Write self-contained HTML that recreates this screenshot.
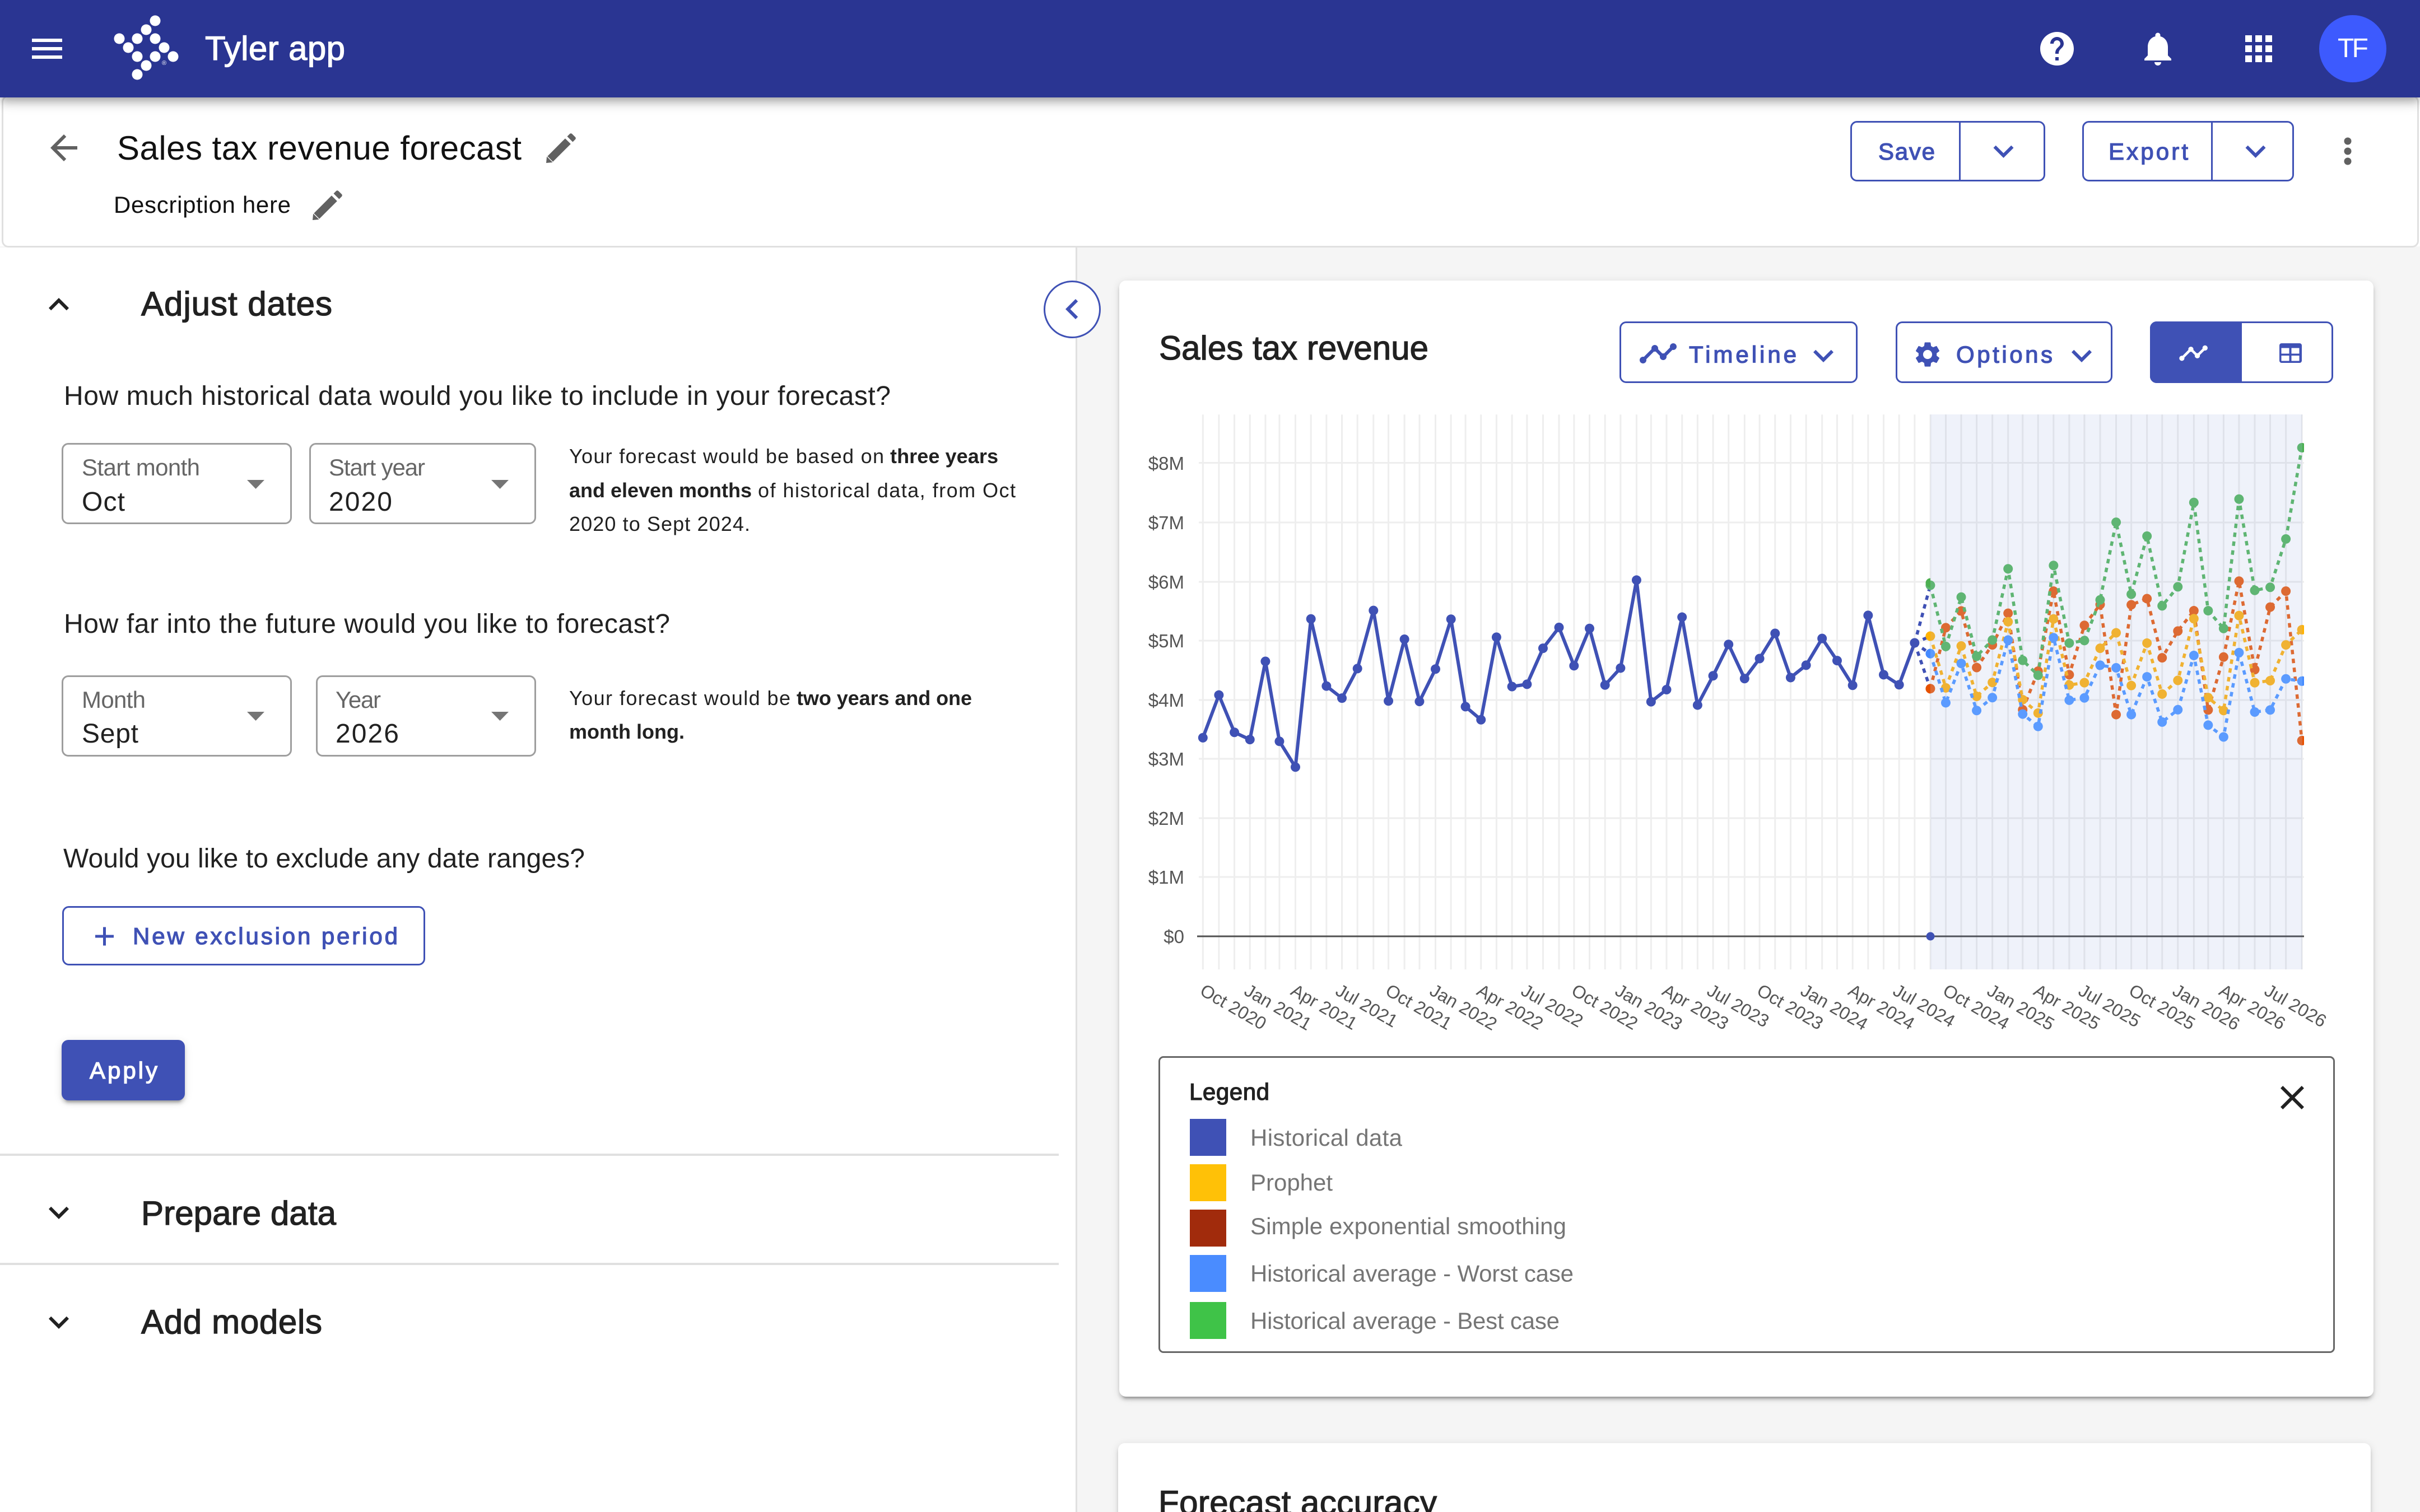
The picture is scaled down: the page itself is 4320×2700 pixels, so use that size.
<!DOCTYPE html>
<html lang="en">
<head>
<meta charset="utf-8">
<title>Tyler app - Sales tax revenue forecast</title>
<style>
html{margin:0;padding:0;width:4320px;height:2700px;overflow:hidden;background:#f5f5f5}
body{margin:0;padding:0;position:relative;width:4320px;height:2700px;overflow:hidden;background:#f5f5f5;font-family:"Liberation Sans",sans-serif}
div{box-sizing:border-box;position:absolute}
#top{left:0;top:0;width:4320px;height:440px;background:#fff}
#appbar{left:0;top:0;width:4320px;height:174px;background:#2a3592;box-shadow:0 6px 12px -3px rgba(0,0,0,.2),0 12px 15px rgba(0,0,0,.14),0 3px 30px rgba(0,0,0,.12);z-index:2}
#sub{left:3px;top:170px;width:4315px;height:272px;background:#fff;border:3px solid #e0e0e0;border-radius:12px;z-index:1}
#left{left:0;top:442px;width:1923px;height:2258px;background:#fff;border-right:3px solid #e0e0e0}
.card{background:#fff;border-radius:12px;box-shadow:0 9px 3px -6px rgba(0,0,0,.2),0 6px 6px rgba(0,0,0,.14),0 3px 15px rgba(0,0,0,.12)}
.btn{border:3px solid #3f51b5;border-radius:12px;background:#fff;z-index:3}
.sel{border:3px solid #9e9e9e;border-radius:12px;background:#fff}
.rule{left:0;width:1890px;height:4px;background:#e0e0e0}
.sw{left:2124px;width:65px}
#ov{position:absolute;left:0;top:0;z-index:4}
text{font-family:"Liberation Sans",sans-serif}
.m{stroke-width:1.3px}
.ns{vector-effect:non-scaling-stroke;fill:none}
</style>
</head>
<body>
<div id="top"></div>
<div id="left"></div>
<div id="sub"></div>
<div id="appbar"></div>

<div class="rule" style="top:2060px"></div>
<div class="rule" style="top:2255px"></div>

<div class="sel" style="left:110px;top:791px;width:411px;height:145px"></div>
<div class="sel" style="left:552px;top:791px;width:405px;height:145px"></div>
<div class="sel" style="left:110px;top:1206px;width:411px;height:145px"></div>
<div class="sel" style="left:564px;top:1206px;width:393px;height:145px"></div>

<div class="btn" style="left:111px;top:1618px;width:648px;height:106px"></div>
<div style="left:110px;top:1857px;width:220px;height:108px;background:#3f51b5;border-radius:12px;box-shadow:0 9px 3px -6px rgba(0,0,0,.2),0 6px 6px rgba(0,0,0,.14),0 3px 15px rgba(0,0,0,.12)"></div>

<div style="left:1863px;top:501px;width:102px;height:103px;border-radius:50%;background:#fff;border:3px solid #3f51b5;z-index:3"></div>

<div class="btn" style="left:3303px;top:216px;width:348px;height:108px"></div>
<div style="left:3497px;top:216px;width:3px;height:108px;background:#3f51b5;z-index:3"></div>
<div class="btn" style="left:3717px;top:216px;width:378px;height:108px"></div>
<div style="left:3947px;top:216px;width:3px;height:108px;background:#3f51b5;z-index:3"></div>

<div class="card" style="left:1998px;top:501px;width:2239px;height:1993px"></div>
<div class="card" style="left:1996px;top:2577px;width:2236px;height:140px"></div>

<div class="btn" style="left:2891px;top:574px;width:425px;height:110px"></div>
<div class="btn" style="left:3384px;top:574px;width:387px;height:110px"></div>
<div class="btn" style="left:3838px;top:574px;width:327px;height:110px"></div>
<div style="left:3838px;top:574px;width:164px;height:110px;background:#3f51b5;border-radius:12px 0 0 12px;z-index:3"></div>

<div style="left:2068px;top:1886px;width:2100px;height:530px;border:3px solid #666;border-radius:9px;background:#fff"></div>
<div class="sw" style="top:1998px;height:66px;background:#3f51b5"></div>
<div class="sw" style="top:2079px;height:66px;background:#ffc107"></div>
<div class="sw" style="top:2160px;height:66px;background:#a12b0c"></div>
<div class="sw" style="top:2241px;height:66px;background:#4a8cff"></div>
<div class="sw" style="top:2325px;height:66px;background:#3fc348"></div>

<svg id="ov" width="4320" height="2700" viewBox="0 0 4320 2700" xmlns="http://www.w3.org/2000/svg">
<defs>
<path id="em" d="M16.59 8.59L12 13.17 7.41 8.59 6 10l6 6 6-6z"/>
<g id="pen">
<path d="M3 21l.35-3.6L14.3 6.4l3.3 3.3L6.6 20.65z"/>
<path d="M15.5 5.2l1.5-1.5c.4-.4 1-.4 1.4 0l1.9 1.9c.4.4.4 1 0 1.4l-1.5 1.5z"/>
<path d="M3.6 17.1l3.3 3.3" stroke="#fff" stroke-width=".45" fill="none"/>
</g>
<path id="tl" d="M23 8c0 1.1-.9 2-2 2-.18 0-.35-.02-.51-.07l-3.56 3.55c.05.16.07.34.07.52 0 1.1-.9 2-2 2s-2-.9-2-2c0-.18.02-.36.07-.52l-2.55-2.55c-.16.05-.34.07-.52.07s-.36-.02-.52-.07l-4.55 4.56c.05.16.07.33.07.51 0 1.1-.9 2-2 2s-2-.9-2-2 .9-2 2-2c.18 0 .35.02.51.07l4.56-4.55C8.02 9.36 8 9.18 8 9c0-1.1.9-2 2-2s2 .9 2 2c0 .18-.02.36-.07.52l2.55 2.55c.16-.05.34-.07.52-.07s.36.02.52.07l3.55-3.56C19.02 8.35 19 8.18 19 8c0-1.1.9-2 2-2s2 .9 2 2z"/>
<clipPath id="plot"><rect x="2000" y="700" width="2113" height="1040"/></clipPath>
<clipPath id="outL"><rect x="3400" y="700" width="46" height="1040"/></clipPath>
<clipPath id="outR"><rect x="4110" y="700" width="3" height="1040"/></clipPath>
</defs>

<!-- app bar -->
<g fill="#fff">
<path transform="translate(48,51) scale(3)" d="M3 18h18v-2H3v2zm0-5h18v-2H3v2zm0-7v2h18V6H3z"/>
<circle cx="277" cy="37" r="9.5"/><circle cx="261" cy="53" r="9.5"/><circle cx="213" cy="69" r="9.5"/><circle cx="245" cy="69" r="9.5"/><circle cx="277" cy="69" r="9.5"/><circle cx="229" cy="85" r="9.5"/><circle cx="293" cy="85" r="9.5"/><circle cx="245" cy="101" r="9.5"/><circle cx="277" cy="101" r="9.5"/><circle cx="309" cy="101" r="9.5"/><circle cx="261" cy="117" r="9.5"/><circle cx="245" cy="133" r="9.5"/>
<text x="289" y="116" font-size="11">®</text>
<text x="366" y="107" font-size="60" textLength="250" stroke="#fff" class="m">Tyler app</text>
<path transform="translate(3636,51) scale(3)" d="M12 2C6.48 2 2 6.48 2 12s4.48 10 10 10 10-4.48 10-10S17.52 2 12 2zm1 17h-2v-2h2v2zm2.07-7.75l-.9.92C13.45 12.9 13 13.5 13 15h-2v-.5c0-1.1.45-2.1 1.17-2.83l1.24-1.26c.37-.36.59-.86.59-1.41 0-1.1-.9-2-2-2s-2 .9-2 2H8c0-2.21 1.79-4 4-4s4 1.79 4 4c0 .88-.36 1.68-.93 2.25z"/>
<path transform="translate(3816,51) scale(3)" d="M12 22c1.1 0 2-.9 2-2h-4c0 1.1.89 2 2 2zm6-6v-5c0-3.07-1.64-5.64-4.5-6.32V4c0-.83-.67-1.5-1.5-1.5s-1.5.67-1.5 1.5v.68C7.63 5.36 6 7.92 6 11v5l-2 2v1h16v-1l-2-2z"/>
<path transform="translate(3996,51) scale(3)" d="M4 8h4V4H4v4zm6 12h4v-4h-4v4zm-6 0h4v-4H4v4zm0-6h4v-4H4v4zm6 0h4v-4h-4v4zm6-10v4h4V4h-4zm-6 4h4V4h-4v4zm6 6h4v-4h-4v4zm0 6h4v-4h-4v4z"/>
</g>
<circle cx="4200" cy="87" r="60" fill="#3d5afe"/>
<text x="4173" y="102" font-size="48" fill="#fff" textLength="55">TF</text>

<!-- sub header -->
<path transform="translate(78,228) scale(3)" fill="#616161" d="M20 11H7.83l5.59-5.59L12 4l-8 8 8 8 1.41-1.41L7.83 13H20v-2z"/>
<text x="209" y="285" font-size="60" fill="#111" textLength="722">Sales tax revenue forecast</text>
<use href="#pen" transform="translate(966,228) scale(3)" fill="#616161"/>
<text x="203" y="380" font-size="42" fill="#111" textLength="316">Description here</text>
<use href="#pen" transform="translate(549,330) scale(3)" fill="#616161"/>
<g fill="#3f51b5" stroke="#3f51b5">
<text x="3353" y="285" font-size="42" textLength="101" class="m">Save</text>
<text x="3764" y="285" font-size="42" textLength="142" class="m">Export</text>
</g>
<g fill="#3f51b5">
<use href="#em" transform="translate(3540.5,234) scale(3)"/>
<use href="#em" transform="translate(3990.5,234) scale(3)"/>
</g>
<g fill="#616161"><circle cx="4191" cy="252" r="6.5"/><circle cx="4191" cy="270" r="6.5"/><circle cx="4191" cy="288" r="6.5"/></g>

<!-- left panel -->
<path transform="translate(69,508) scale(3)" fill="#212121" d="M12 8l-6 6 1.41 1.41L12 10.83l4.59 4.58L18 14z"/>
<path transform="translate(1878,516) scale(3)" fill="#3f51b5" d="M15.41 7.41L14 6l-6 6 6 6 1.41-1.41L10.83 12z"/>
<g fill="#212121">
<text x="252" y="563" font-size="60" textLength="341" stroke="#212121" class="m">Adjust dates</text>
<text x="114" y="723" font-size="48" textLength="1476">How much historical data would you like to include in your forecast?</text>
<text x="114" y="1130" font-size="48" textLength="1082">How far into the future would you like to forecast?</text>
<text x="113" y="1549" font-size="48" textLength="931">Would you like to exclude any date ranges?</text>
<text x="146" y="912" font-size="48" textLength="77">Oct</text>
<text x="587" y="912" font-size="48" textLength="113">2020</text>
<text x="146" y="1326" font-size="48" textLength="101">Sept</text>
<text x="599" y="1326" font-size="48" textLength="113">2026</text>
<text x="1016" y="827" font-size="36" textLength="562">Your forecast would be based on</text>
<text x="1589" y="827" font-size="36" font-weight="700" textLength="193">three years</text>
<text x="1016" y="888" font-size="36" font-weight="700" textLength="326">and eleven months</text>
<text x="1353" y="888" font-size="36" textLength="460">of historical data, from Oct</text>
<text x="1016" y="948" font-size="36" textLength="323">2020 to Sept 2024.</text>
<text x="1016" y="1259" font-size="36" textLength="395">Your forecast would be</text>
<text x="1422" y="1259" font-size="36" font-weight="700" textLength="313">two years and one</text>
<text x="1016" y="1319" font-size="36" font-weight="700" textLength="206">month long.</text>
<text x="252" y="2187" font-size="60" textLength="348" stroke="#212121" class="m">Prepare data</text>
<text x="252" y="2381" font-size="60" textLength="323" stroke="#212121" class="m">Add models</text>
</g>
<g fill="#666">
<text x="146" y="849" font-size="42" textLength="211">Start month</text>
<text x="587" y="849" font-size="42" textLength="172">Start year</text>
<text x="146" y="1264" font-size="42" textLength="114">Month</text>
<text x="599" y="1264" font-size="42" textLength="81">Year</text>
</g>
<g fill="#757575">
<polygon points="441,857 472,857 456.5,873"/><polygon points="877,857 908,857 892.5,873"/>
<polygon points="441,1271 472,1271 456.5,1287"/><polygon points="877,1271 908,1271 892.5,1287"/>
</g>
<rect x="170" y="1669.5" width="33" height="5" fill="#3f51b5"/><rect x="184" y="1655.5" width="5" height="33" fill="#3f51b5"/>
<text x="237" y="1686" font-size="42" fill="#3f51b5" stroke="#3f51b5" class="m" textLength="473">New exclusion period</text>
<text x="160" y="1926" font-size="42" fill="#fff" stroke="#fff" class="m" textLength="121">Apply</text>
<use href="#em" transform="translate(69,2129) scale(3)" fill="#212121"/>
<use href="#em" transform="translate(69,2325) scale(3)" fill="#212121"/>

<!-- chart card header -->
<text x="2069" y="642" font-size="60" fill="#212121" stroke="#212121" class="m" textLength="481">Sales tax revenue</text>
<g fill="#3f51b5">
<use href="#tl" transform="translate(2924,595) scale(3)"/>
<text x="3015" y="647.5" font-size="42" stroke="#3f51b5" class="m" textLength="192">Timeline</text>
<use href="#em" transform="translate(3219,599) scale(3)"/>
<path transform="translate(3414,606) scale(2.25)" d="M19.14 12.94c.04-.3.06-.61.06-.94 0-.32-.02-.64-.07-.94l2.03-1.58c.18-.14.23-.41.12-.61l-1.92-3.32c-.12-.22-.37-.29-.59-.22l-2.39.96c-.5-.38-1.03-.7-1.62-.94l-.36-2.54c-.04-.24-.24-.41-.48-.41h-3.84c-.24 0-.43.17-.47.41l-.36 2.54c-.59.24-1.13.57-1.62.94l-2.39-.96c-.22-.08-.47 0-.59.22L2.74 8.87c-.12.21-.08.47.12.61l2.03 1.58c-.05.3-.09.63-.09.94s.02.64.07.94l-2.03 1.58c-.18.14-.23.41-.12.61l1.92 3.32c.12.22.37.29.59.22l2.39-.96c.5.38 1.03.7 1.62.94l.36 2.54c.05.24.24.41.48.41h3.84c.24 0 .44-.17.47-.41l.36-2.54c.59-.24 1.13-.56 1.62-.94l2.39.96c.22.08.47 0 .59-.22l1.92-3.32c.12-.22.07-.47-.12-.61l-2.01-1.58zM12 15.6c-1.98 0-3.6-1.62-3.6-3.6s1.62-3.6 3.6-3.6 3.6 1.62 3.6 3.6-1.62 3.6-3.6 3.6z"/>
<text x="3492" y="647.5" font-size="42" stroke="#3f51b5" class="m" textLength="172">Options</text>
<use href="#em" transform="translate(3680,599) scale(3)"/>
<rect x="4069" y="613" width="40" height="35" rx="4"/>
</g>
<use href="#tl" transform="translate(3888,603) scale(2.3)" fill="#fff"/>
<g fill="#fff"><rect x="4072.5" y="621.5" width="14" height="10"/><rect x="4090.5" y="621.5" width="14" height="10"/><rect x="4072.5" y="635" width="14" height="9.5"/><rect x="4090.5" y="635" width="14" height="9.5"/></g>

<!-- chart -->
<g id="chart">
 <path stroke="#eee" stroke-width="3" fill="none" d="M2140 826.5H4113M2140 933H4113M2140 1039H4113M2140 1144H4113M2140 1250H4113M2140 1355H4113M2140 1461H4113M2140 1566H4113"/>
 <g transform="translate(2000,720) scale(.892857,.459184)">
  <path class="ns" stroke="#eee" stroke-width="3" d="M165 44V2202M197 44V2202M228 44V2202M259 44V2202M290 44V2202M318 44V2202M350 44V2202M381 44V2202M412 44V2202M443 44V2202M474 44V2202M506 44V2202M536 44V2202M568 44V2202M598 44V2202M630 44V2202M661 44V2202M690 44V2202M721 44V2202M752 44V2202M783 44V2202M813 44V2202M845 44V2202M877 44V2202M907 44V2202M938 44V2202M969 44V2202M1000 44V2202M1032 44V2202M1061 44V2202M1092 44V2202M1123 44V2202M1154 44V2202M1185 44V2202M1216 44V2202M1248 44V2202M1278 44V2202M1309 44V2202M1340 44V2202M1371 44V2202M1403 44V2202M1433 44V2202M1464 44V2202M1495 44V2202M1526 44V2202M1557 44V2202M1588 44V2202"/>
 </g>
 <g transform="translate(3350,720) scale(.510204,.459184)">
  <path class="ns" stroke="#eee" stroke-width="3" d="M188 44V2202M242 44V2202M296 44V2202M350 44V2202M405 44V2202M460 44V2202M511 44V2202M565 44V2202M619 44V2202M674 44V2202M727 44V2202M782 44V2202M838 44V2202M891 44V2202M946 44V2202M999 44V2202M1054 44V2202M1110 44V2202M1160 44V2202M1214 44V2202M1268 44V2202M1323 44V2202M1377 44V2202M1432 44V2202M1488 44V2202"/>
 </g>
 <rect x="2137" y="1670.5" width="1976" height="3" fill="#505050"/>
 <rect x="3446" y="740" width="664" height="991" fill="#4263c7" fill-opacity=".085"/>
 <circle cx="3446" cy="1672" r="7.5" fill="#3f51b5"/>

 <g transform="translate(2000,720) scale(.892857,.459184)">
  <polyline class="ns" stroke="#3f51b5" stroke-width="6" stroke-linejoin="round" points="165,1301 197,1135 228,1280 259,1308 290,1004 318,1315 350,1415 381,839 412,1100 443,1147 474,1032 506,806 536,1158 568,918 598,1160 630,1034 661,840 690,1180 721,1231 752,910 783,1102 813,1093 845,953 877,872 907,1021 938,876 969,1096 1000,1030 1032,688 1061,1161 1092,1114 1123,832 1154,1174 1185,1060 1216,938 1248,1071 1278,993 1309,895 1340,1067 1371,1019 1403,915 1433,1001 1464,1097 1495,825 1526,1056 1557,1095 1588,932"/>
  <path class="ns" stroke="#3f51b5" stroke-width="17" stroke-linecap="round" d="M165 1301h0M197 1135h0M228 1280h0M259 1308h0M290 1004h0M318 1315h0M350 1415h0M381 839h0M412 1100h0M443 1147h0M474 1032h0M506 806h0M536 1158h0M568 918h0M598 1160h0M630 1034h0M661 840h0M690 1180h0M721 1231h0M752 910h0M783 1102h0M813 1093h0M845 953h0M877 872h0M907 1021h0M938 876h0M969 1096h0M1000 1030h0M1032 688h0M1061 1161h0M1092 1114h0M1123 832h0M1154 1174h0M1185 1060h0M1216 938h0M1248 1071h0M1278 993h0M1309 895h0M1340 1067h0M1371 1019h0M1403 915h0M1433 1001h0M1464 1097h0M1495 825h0M1526 1056h0M1557 1095h0M1588 932h0"/>
 </g>

 <g clip-path="url(#plot)">
 <g transform="translate(3350,720) scale(.510204,.459184)">
  <path class="ns" stroke="#3f51b5" stroke-width="5.5" stroke-dasharray="8 8" d="M133 933L188 708M133 933L188 906M133 933L188 974M133 933L188 1110"/>
  <g stroke="#dd6a33">
   <polyline class="ns" stroke-width="5.5" stroke-dasharray="8 8" points="188,1110 242,873 296,808 350,1028 405,940 460,817 511,1192 565,1042 619,731 674,1056 727,864 782,783 838,1211 891,784 946,760 999,990 1054,886 1110,807 1160,1193 1214,987 1268,692 1323,1036 1377,793 1432,731 1488,1312"/>
   <path class="ns" stroke-width="17" stroke-linecap="round" d="M188 1110h0M242 873h0M296 808h0M350 1028h0M405 940h0M460 817h0M511 1192h0M565 1042h0M619 731h0M674 1056h0M727 864h0M782 783h0M838 1211h0M891 784h0M946 760h0M999 990h0M1054 886h0M1110 807h0M1160 1193h0M1214 987h0M1268 692h0M1323 1036h0M1377 793h0M1432 731h0M1488 1312h0"/>
  </g>
  <g stroke="#f0b232">
   <polyline class="ns" stroke-width="5.5" stroke-dasharray="8 8" points="188,906 242,1107 296,944 350,1140 405,1086 460,850 511,1153 565,1205 619,839 674,1096 727,1087 782,953 838,893 891,1098 946,933 999,1131 1054,1078 1110,838 1160,1145 1214,1195 1268,826 1323,1087 1377,1079 1432,940 1488,881"/>
   <path class="ns" stroke-width="17" stroke-linecap="round" d="M188 906h0M242 1107h0M296 944h0M350 1140h0M405 1086h0M460 850h0M511 1153h0M565 1205h0M619 839h0M674 1096h0M727 1087h0M782 953h0M838 893h0M891 1098h0M946 933h0M999 1131h0M1054 1078h0M1110 838h0M1160 1145h0M1214 1195h0M1268 826h0M1323 1087h0M1377 1079h0M1432 940h0M1488 881h0"/>
  </g>
  <g stroke="#5b9bff">
   <polyline class="ns" stroke-width="5.5" stroke-dasharray="8 8" points="188,974 242,1165 296,1012 350,1195 405,1145 460,921 511,1209 565,1257 619,912 674,1155 727,1146 782,1019 838,1029 891,1211 946,1064 999,1240 1054,1192 1110,981 1160,1252 1214,1298 1268,970 1323,1201 1377,1193 1432,1072 1488,1081"/>
   <path class="ns" stroke-width="17" stroke-linecap="round" d="M188 974h0M242 1165h0M296 1012h0M350 1195h0M405 1145h0M460 921h0M511 1209h0M565 1257h0M619 912h0M674 1155h0M727 1146h0M782 1019h0M838 1029h0M891 1211h0M946 1064h0M999 1240h0M1054 1192h0M1110 981h0M1160 1252h0M1214 1298h0M1268 970h0M1323 1201h0M1377 1193h0M1432 1072h0M1488 1081h0"/>
  </g>
  <g stroke="#5fb573">
   <polyline class="ns" stroke-width="5.5" stroke-dasharray="8 8" points="188,708 242,946 296,754 350,984 405,921 460,644 511,1000 565,1058 619,631 674,933 727,923 782,765 838,463 891,743 946,517 999,788 1054,714 1110,386 1160,807 1214,876 1268,373 1323,728 1377,716 1432,528 1488,173"/>
   <path class="ns" stroke-width="17" stroke-linecap="round" d="M188 708h0M242 946h0M296 754h0M350 984h0M405 921h0M460 644h0M511 1000h0M565 1058h0M619 631h0M674 933h0M727 923h0M782 765h0M838 463h0M891 743h0M946 517h0M999 788h0M1054 714h0M1110 386h0M1160 807h0M1214 876h0M1268 373h0M1323 728h0M1377 716h0M1432 528h0M1488 173h0"/>
  </g>
 </g>
 </g>
 <g clip-path="url(#outL)">
  <circle cx="3446" cy="1041" r="8.5" fill="#4caf50"/><circle cx="3446" cy="1136" r="8.5" fill="#ffb300"/><circle cx="3446" cy="1167" r="8.5" fill="#448aff"/><circle cx="3446" cy="1230" r="8.5" fill="#e65100"/>
 </g>
 <g clip-path="url(#outR)">
  <circle cx="4109" cy="799.5" r="8.5" fill="#4caf50"/><circle cx="4109" cy="1124.5" r="8.5" fill="#ffb300"/><circle cx="4109" cy="1216" r="8.5" fill="#448aff"/><circle cx="4109" cy="1322.5" r="8.5" fill="#e65100"/>
 </g>

 <g fill="#555" font-size="33" text-anchor="end">
  <text x="2114" y="839">$8M</text><text x="2114" y="945">$7M</text><text x="2114" y="1051">$6M</text><text x="2114" y="1156">$5M</text><text x="2114" y="1262">$4M</text><text x="2114" y="1367">$3M</text><text x="2114" y="1473">$2M</text><text x="2114" y="1578">$1M</text><text x="2114" y="1684">$0</text>
 </g>
 <g fill="#555" font-size="32">
  <text transform="translate(2140,1775) rotate(30)">Oct 2020</text>
  <text transform="translate(2219,1775) rotate(30)">Jan 2021</text>
  <text transform="translate(2302,1775) rotate(30)">Apr 2021</text>
  <text transform="translate(2382,1775) rotate(30)">Jul 2021</text>
  <text transform="translate(2471,1775) rotate(30)">Oct 2021</text>
  <text transform="translate(2550,1775) rotate(30)">Jan 2022</text>
  <text transform="translate(2634,1775) rotate(30)">Apr 2022</text>
  <text transform="translate(2713,1775) rotate(30)">Jul 2022</text>
  <text transform="translate(2803,1775) rotate(30)">Oct 2022</text>
  <text transform="translate(2881,1775) rotate(30)">Jan 2023</text>
  <text transform="translate(2965,1775) rotate(30)">Apr 2023</text>
  <text transform="translate(3045,1775) rotate(30)">Jul 2023</text>
  <text transform="translate(3134,1775) rotate(30)">Oct 2023</text>
  <text transform="translate(3212,1775) rotate(30)">Jan 2024</text>
  <text transform="translate(3297,1775) rotate(30)">Apr 2024</text>
  <text transform="translate(3377,1775) rotate(30)">Jul 2024</text>
  <text transform="translate(3466,1775) rotate(30)">Oct 2024</text>
  <text transform="translate(3545,1775) rotate(30)">Jan 2025</text>
  <text transform="translate(3628,1775) rotate(30)">Apr 2025</text>
  <text transform="translate(3708,1775) rotate(30)">Jul 2025</text>
  <text transform="translate(3798,1775) rotate(30)">Oct 2025</text>
  <text transform="translate(3876,1775) rotate(30)">Jan 2026</text>
  <text transform="translate(3959,1775) rotate(30)">Apr 2026</text>
  <text transform="translate(4040,1775) rotate(30)">Jul 2026</text>
 </g>
</g>

<!-- legend -->
<text x="2123" y="1964" font-size="42" fill="#212121" stroke="#212121" class="m" textLength="143">Legend</text>
<path transform="translate(4056,1924) scale(3)" fill="#212121" d="M19 6.41L17.59 5 12 10.59 6.41 5 5 6.41 10.59 12 5 17.59 6.41 19 12 13.41 17.59 19 19 17.59 13.41 12z"/>
<g fill="#757575" font-size="42">
<text x="2232" y="2046" textLength="271">Historical data</text>
<text x="2232" y="2126" textLength="147">Prophet</text>
<text x="2232" y="2204" textLength="564">Simple exponential smoothing</text>
<text x="2232" y="2288.5" textLength="577">Historical average - Worst case</text>
<text x="2232" y="2373" textLength="552">Historical average - Best case</text>
</g>
<text x="2068" y="2704" font-size="60" fill="#212121" stroke="#212121" class="m" textLength="497">Forecast accuracy</text>
</svg>
</body>
</html>
